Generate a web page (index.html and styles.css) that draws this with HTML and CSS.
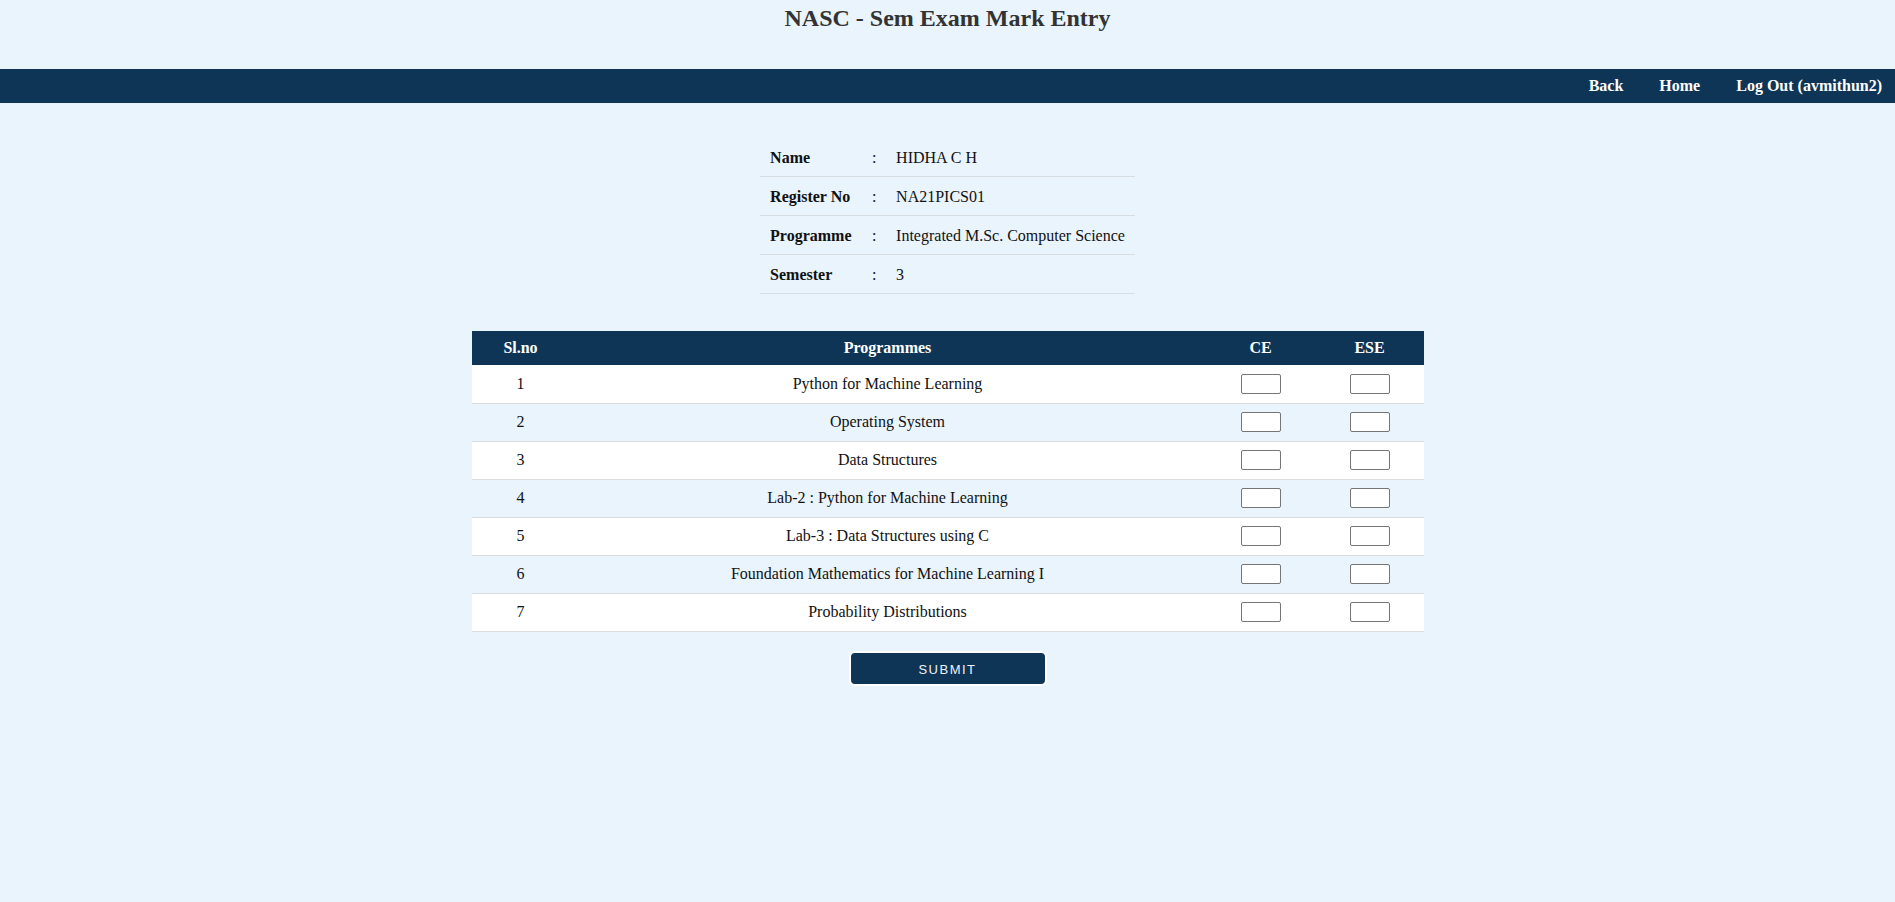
FILE: index.html
```html
<!DOCTYPE html>
<html lang="en">
<head>
<meta charset="utf-8">
<title>NASC - Sem Exam Mark Entry</title>
<link rel="stylesheet" href="styles.css">
</head>
<body>
<header class="page-head">
  <h2 class="title">NASC - Sem Exam Mark Entry</h2>
</header>
<nav class="navbar">
  <a href="#" class="nav-link">Back</a>
  <a href="#" class="nav-link">Home</a>
  <a href="#" class="nav-link">Log Out (avmithun2)</a>
</nav>
<main class="content">
  <div class="info">
    <div class="info-row"><span class="info-label">Name</span><span class="info-colon">:</span><span class="info-value">HIDHA C H</span></div>
    <div class="info-row"><span class="info-label">Register No</span><span class="info-colon">:</span><span class="info-value">NA21PICS01</span></div>
    <div class="info-row"><span class="info-label">Programme</span><span class="info-colon">:</span><span class="info-value">Integrated M.Sc. Computer Science</span></div>
    <div class="info-row"><span class="info-label">Semester</span><span class="info-colon">:</span><span class="info-value">3</span></div>
  </div>

  <table class="marks">
    <colgroup>
      <col class="c-sl"><col class="c-prog"><col class="c-ce"><col class="c-ese">
    </colgroup>
    <thead>
      <tr><th>Sl.no</th><th>Programmes</th><th>CE</th><th>ESE</th></tr>
    </thead>
    <tbody>
      <tr><td>1</td><td>Python for Machine Learning</td><td><input class="mark" type="text"></td><td><input class="mark" type="text"></td></tr>
      <tr><td>2</td><td>Operating System</td><td><input class="mark" type="text"></td><td><input class="mark" type="text"></td></tr>
      <tr><td>3</td><td>Data Structures</td><td><input class="mark" type="text"></td><td><input class="mark" type="text"></td></tr>
      <tr><td>4</td><td>Lab-2 : Python for Machine Learning</td><td><input class="mark" type="text"></td><td><input class="mark" type="text"></td></tr>
      <tr><td>5</td><td>Lab-3 : Data Structures using C</td><td><input class="mark" type="text"></td><td><input class="mark" type="text"></td></tr>
      <tr><td>6</td><td>Foundation Mathematics for Machine Learning I</td><td><input class="mark" type="text"></td><td><input class="mark" type="text"></td></tr>
      <tr><td>7</td><td>Probability Distributions</td><td><input class="mark" type="text"></td><td><input class="mark" type="text"></td></tr>
    </tbody>
  </table>

  <div class="actions">
    <button class="submit" type="button">SUBMIT</button>
  </div>
</main>
</body>
</html>
```

FILE: styles.css
```css
* { box-sizing: border-box; }

html, body {
  margin: 0;
  padding: 0;
  background: #e9f4fd;
  font-family: "Liberation Serif", "Times New Roman", serif;
  color: #111;
  min-height: 902px;
}

.page-head {
  height: 69px;
  padding-top: 4px;
  text-align: center;
}

.title {
  margin: 0;
  font-size: 24px;
  line-height: 28px;
  font-weight: bold;
  color: #333;
}

.navbar {
  height: 34px;
  background: #0e3556;
  display: flex;
  justify-content: flex-end;
  align-items: center;
  gap: 36px;
  padding-right: 13px;
}

.nav-link {
  color: #fff;
  font-weight: bold;
  font-size: 16px;
  text-decoration: none;
}

.content {
  display: flex;
  flex-direction: column;
  align-items: center;
  padding-top: 35px;
}

.info {
  display: grid;
  grid-template-columns: 102px 24px max-content;
  width: max-content;
}

.info-row {
  display: contents;
}

.info-row > span {
  height: 39px;
  display: flex;
  align-items: center;
  padding-top: 1px;
  border-bottom: 1px solid #d8dde2;
  font-size: 16px;
  white-space: nowrap;
}

.info-label {
  padding-left: 10px;
  font-weight: bold;
}

.info-colon {
  padding-left: 10px;
}

.info-value {
  padding-left: 10px;
  padding-right: 10px;
}

.marks {
  margin-top: 37px;
  width: 952px;
  border-collapse: collapse;
  table-layout: fixed;
  font-size: 16px;
}

.c-sl { width: 98px; }
.c-prog { width: 636px; }
.c-ce { width: 110px; }
.c-ese { width: 108px; }

.marks th {
  background: #0e3556;
  color: #fff;
  font-weight: bold;
  height: 34px;
  padding: 0;
  text-align: center;
}

.marks td {
  height: 38px;
  padding: 0;
  text-align: center;
  border-bottom: 1px solid #d9dcdf;
}

.marks tbody tr:nth-child(odd) td { background: #fff; }
.marks tbody tr:nth-child(even) td { background: #e9f4fd; }

.mark {
  display: block;
  margin: 0 auto;
  width: 40px;
  height: 20px;
  border: 1px solid #767676;
  border-radius: 2px;
  background: #fff;
  padding: 0 2px;
}

.actions {
  margin-top: 19px;
}

.submit {
  width: 198px;
  height: 35px;
  background: #0e3556;
  border: 2px solid #fff;
  border-radius: 6px;
  color: #eef3f8;
  font-family: "Liberation Sans", Arial, sans-serif;
  font-size: 13px;
  letter-spacing: 1.5px;
  padding: 3px 0 0 0;
  cursor: pointer;
}
```
